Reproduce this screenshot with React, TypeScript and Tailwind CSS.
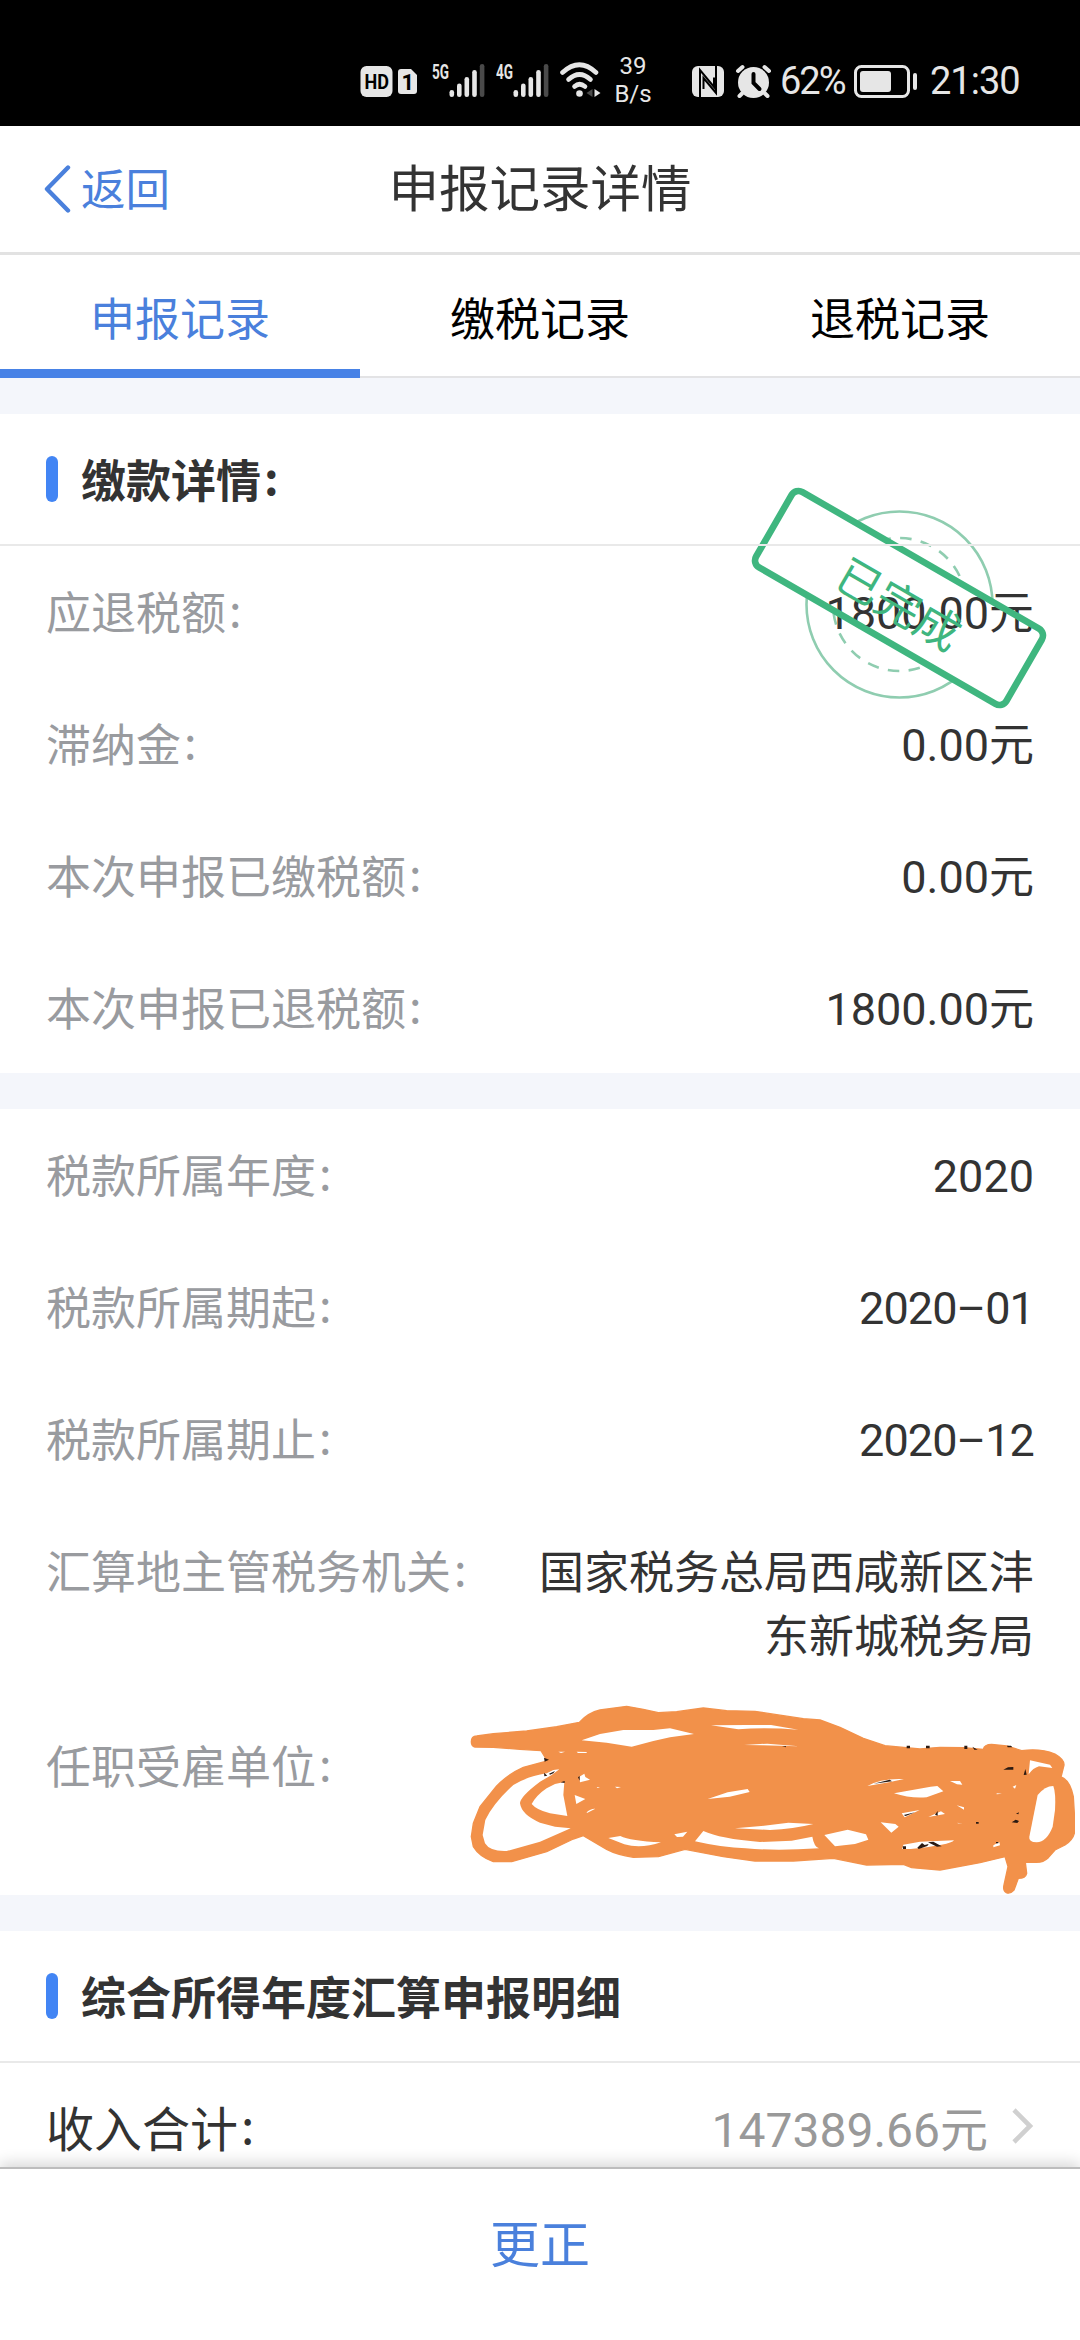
import { ReactNode } from "react"

type RowItem = {
    label: string
    value: string
}

const paymentRows: RowItem[] = [
    { label: "应退税额", value: "1800.00元" },
    { label: "滞纳金", value: "0.00元" },
    { label: "本次申报已缴税额", value: "0.00元" },
    { label: "本次申报已退税额", value: "1800.00元" },
]

const periodRows: RowItem[] = [
    { label: "税款所属年度", value: "2020" },
    { label: "税款所属期起", value: "2020–01" },
    { label: "税款所属期止", value: "2020–12" },
]

const tabs = ["申报记录", "缴税记录", "退税记录"]

const Signal = ({ label }: { label: string }) => (
    <svg width="54" height="36" viewBox="0 0 54 36" fill="#e6e6e6">
        <text x="0" y="16.5" fontSize="19.5" fontWeight="700" textLength="17" lengthAdjust="spacingAndGlyphs" fontFamily="Roboto, sans-serif">{label}</text>
        <rect x="17.5" y="28" width="4.6" height="7" rx="2.3" />
        <rect x="25" y="21.5" width="4.6" height="13.5" rx="2.3" />
        <rect x="32.5" y="15" width="4.6" height="20" rx="2.3" />
        <rect x="40.2" y="8" width="4.6" height="27" rx="2.3" />
        <rect x="47.8" y="2" width="4.6" height="33" rx="2.3" fill="#4a4a4a" />
    </svg>
)

const StatusBar = () => {
    return (
        <div className="flex h-[126px] items-center bg-black pt-[33px] pl-[360px] text-[#e6e6e6]">
            <svg width="58" height="36" viewBox="0 0 58 36">
                <rect x="0.5" y="4" width="32" height="31" rx="6" fill="#e6e6e6" />
                <text x="4.5" y="27.3" fontSize="20.5" fontWeight="700" textLength="24.5" lengthAdjust="spacingAndGlyphs" fontFamily="Roboto, sans-serif" fill="#000">HD</text>
                <path d="M41 7h10l6 6v16a3 3 0 0 1-3 3H41a3 3 0 0 1-3-3V10a3 3 0 0 1 3-3z" fill="#e6e6e6" />
                <text x="41.5" y="27.5" fontSize="22" fontWeight="700" fontFamily="Roboto, sans-serif" fill="#000">1</text>
            </svg>
            <div className="ml-[14px]"><Signal label="5G" /></div>
            <div className="ml-[10px]"><Signal label="4G" /></div>
            <svg className="ml-[9px]" width="44" height="36" viewBox="0 0 44 36" fill="none" stroke="#e6e6e6" strokeWidth="4.6" strokeLinecap="round">
                <path d="M3.5 10.5Q20.5-5 37 10.5" />
                <path d="M9.5 17.5Q20.5 7.5 31.5 17.5" />
                <path d="M15.5 24.5Q20.5 20 26 24.5" />
                <circle cx="20.5" cy="31.5" r="3.3" fill="#e6e6e6" stroke="none" />
                <path d="M33.5 27v8l-6-4z" fill="#4a4a4a" stroke="none" />
                <path d="M35.5 27v8l6-4z" fill="#e6e6e6" stroke="none" />
            </svg>
            <div className="ml-[9px] w-[42px] text-center font-[Roboto] text-[24px] leading-[28px]">
                <p>39</p>
                <p>B/s</p>
            </div>
            <svg className="ml-[37px]" width="34" height="36" viewBox="0 0 34 36">
                <rect x="1" y="4" width="32" height="31" rx="6" fill="#e6e6e6" />
                <path d="M9 35V8l14 17v-9.500M25 4v27L12.500 16v11" fill="none" stroke="#000" strokeWidth="2" />
            </svg>
            <svg className="ml-[10px]" width="38" height="36" viewBox="0 0 38 36" fill="none" stroke="#e6e6e6" strokeLinecap="round">
                <circle cx="18.5" cy="20.5" r="15.5" fill="#e6e6e6" stroke="none" />
                <path d="M3 9l4.500-4M34 9l-4.500-4M7 31.500l-2.500 2.500M30 31.500l2.500 2.500" strokeWidth="4" />
                <path d="M18.500 12v9l6 6" stroke="#000" strokeWidth="4" />
            </svg>
            <span className="ml-[7px] w-[68px] pt-[3px] font-[Roboto] text-[38px] leading-none tracking-[-2px]">62%</span>
            <svg className="ml-[6px]" width="64" height="36" viewBox="0 0 64 36">
                <rect x="1.5" y="4.5" width="53" height="30" rx="6" fill="none" stroke="#e6e6e6" strokeWidth="3" />
                <rect x="6" y="9" width="31" height="21" rx="3" fill="#e6e6e6" />
                <rect x="59" y="11" width="4" height="17" rx="2" fill="#e6e6e6" />
            </svg>
            <span className="ml-[12px] pt-[3px] font-[Roboto] text-[38px] leading-none tracking-[-1px]">21:30</span>
        </div>
    )
}

const Colon = () => <span className="relative -top-[3px] ml-[3px]">:</span>

// digits in Roboto, everything else stays in the CJK face
const Value = ({ children }: { children: ReactNode }) => (
    <span>
        <span className="font-['Roboto','Noto_Sans_CJK_SC',sans-serif] leading-none">{children}</span>
    </span>
)

const SectionTitle = ({ children }: { children: ReactNode }) => (
    <div className="relative z-10 flex h-[132px] items-center border-b-2 border-[#e9e9e9] pl-[46px]">
        <div className="h-[46px] w-3 rounded-full bg-[#4285f4]" />
        <h2 className="ml-[23px] text-[45px] font-bold leading-[64px]">{children}</h2>
    </div>
)

const Row = ({ label, value }: RowItem) => (
    <div className="flex h-[132px] items-center justify-between px-[46px] pb-[3px]">
        <span className="text-[#999b9f]">{label}<Colon /></span>
        <span className={value.includes("–") ? "pb-[2px] tracking-[-0.9px]" : "pb-[2px]"}>
            <Value>{value}</Value>
        </span>
    </div>
)

const Stamp = () => (
    <svg className="absolute right-[27px] top-[60px]" width="310" height="240" viewBox="742 474 310 240" fill="none">
        <defs>
            <mask id="outside-label">
                <rect x="742" y="474" width="310" height="240" fill="#fff" />
                <rect x="753.5" y="554.5" width="289" height="87" rx="8" transform="rotate(30 898 598)" fill="#000" />
            </mask>
        </defs>
        <g mask="url(#outside-label)" stroke="#8fcdb0" strokeWidth="2.6">
            <circle cx="898.5" cy="604.5" r="93" />
            <circle cx="898.5" cy="604.5" r="66.5" strokeDasharray="11.5 9.4" />
        </g>
        <rect x="753.5" y="554.5" width="289" height="87" rx="8" transform="rotate(30 898 598)" stroke="#3fb67f" strokeWidth="6.6" />
        <text x="898" y="621" textAnchor="middle" fontSize="45" transform="rotate(30 898 604)" fill="#3fb67f">已完成</text>
    </svg>
)

// marker strokes that cover the employer name
const Scribble = () => (
    <svg className="absolute left-[440px] top-[571px]" width="640" height="220" viewBox="0 0 1920 660">
        <path
            fill="#f2914a"
            stroke="#f2914a"
            strokeWidth="4"
            strokeLinejoin="round"
            d="M94 185Q94 169 110 168L160 161 260 153 350 140 418 127Q445 98 480 90L560 79 610 88 655 98 710 95 790 84 860 92 945 94 1010 104 1090 116 1140 120 1200 142 1270 175 1335 197 1440 207 1500 202 1570 203 1630 208Q1633 193 1655 193L1700 198 1745 212Q1800 204 1845 222 1873 238 1872 255L1863 291Q1890 300 1900 350L1903 400 1903 460Q1898 480 1875 495L1845 510 1825 533Q1810 547 1790 547L1756 547 1760 580Q1757 595 1735 595L1722 630Q1710 643 1699 638 1688 632 1692 615L1704 560 1695 530 1620 548 1500 570 1415 563 1390 553 1280 555 1180 535 1060 543 945 543 850 530 735 508 655 530 580 532Q530 524 500 508L430 467 400 477 320 515 215 545 160 545Q118 530 100 500L94 470 100 430 120 380 170 318Q205 282 250 262L322 243 303 212 240 208 160 202 105 201Q94 198 94 185z"
        />
        <g fill="#fff">
            <path d="M392 445L300 485 200 513Q150 515 135 490L128 465 136 420Q160 370 220 315 260 290 320 280L340 270 358 268 335 285 300 305Q240 350 240 370 245 405 300 428L345 440z" />
            <path d="M275 372Q290 345 320 325L345 312 373 306 370 345 382 408 330 400Q290 390 275 372z" />
            <path d="M425 181L480 162 550 150 640 150 690 145 762 162 690 172 640 183 575 200 500 188z" />
            <path d="M418 290l15-9 3 10 14 8-30 8zM404 345l32 12-27 15zM440 397q12-12 26-11l-25 13zM505 474l36-6q30 15 122 19-60 20-110 6zM703 463l39-8-13 15-18 1zM790 453q50 23 170 33l95-4 62-12q5 30 20 35-130 8-220 0-70-2-152-21z" />
            <path d="M803 357l60-20 60-10 6 9-60 14zM885 445l70-6 90-11 75 4q-60 15-130 18zM813 136l110-1 70 0 82 14q-100-8-180-1zM912 195l70-4 95 8-110-3zM355 215h20l-12 4zM410 215l30 1v3h-26zM525 320l18 1-12 4zM470 321l10 1-7 2z" />
            <path d="M1153 465l70-16 55 14 7 16-40 13-60 7zM1322 427l44 5 10 8-22 18zM1362 340l110-20 20-2 18 16-50 18q-50 4-98-12zM1282 318q40-24 110-21l-45 10zM1530 303h30l7 11-16-1zM1550 376l22 6v7zM1553 428l14 4-14-2zM1385 400l54-10-45 22zM1465 411l38-17 12 8zM1390 494l50-9 102-4q-10 14-130 26h-26zM1660 496l18-10 2 10-20 6zM1670 340l16 1-16 2zM1718 320l11-5-4 11z" />
            <path d="M1770 241l60 13 7 10-40-5q-18 5-31 24z" />
            <path d="M1793 345Q1815 318 1840 318 1848 340 1845 390L1838 440Q1820 486 1790 487 1765 486 1768 470z" />
        </g>
        <path
            fill="#2b1a12"
            d="M312 233l15 6-13 6zM312 278l10 9-9 2zM327 281l18-8-5 7-10 4zM362 307l12-4v6zM414 292l5-4v14zM1301 311l48-12 7 5zM1400 197h10v8h-10zM1458 197h11v8h-11zM1573 197h9v10h-9zM1597 200l16 9h-10zM1701 197h12l4 5h-14zM1690 269l14-7 16-1v8zM1751 285l5-18 4 17zM1391 405l34-8-28 11zM1485 404l8-11v14zM1432 503l14-14 8 6 12-3-4 6-26 9zM1464 487l16-2 25 14-14 1zM1388 499h10v8h-9zM1715 427l12-8 10 4-5 6zM1728 401l9-4-2 6zM1608 426h8v5h-8zM1668 486h7v4h-7zM1026 198l12 1v3z"
        />
    </svg>
)

const Divider = () => <div className="h-9 shrink-0 bg-[#f4f6fb]" />

export default function App() {
    return (
        <div className="flex h-[2340px] w-[1080px] flex-col overflow-hidden bg-white font-['Noto_Sans_CJK_SC',sans-serif] text-[45px] leading-[64px] text-[#333]">
            <StatusBar />

            <header className="grid h-[129px] shrink-0 grid-cols-3 items-center border-b-[3px] border-[#e2e2e2]">
                <div className="flex items-center pl-[44px] text-[#4a80dc]">
                    <svg width="28" height="48" viewBox="0 0 28 48" fill="none" stroke="currentColor" strokeWidth="4.4" strokeLinecap="round" strokeLinejoin="round">
                        <path d="M24 2.500L3 24l21 21.500" />
                    </svg>
                    <span className="ml-[9px] pb-1 text-[44.5px]">返回</span>
                </div>
                <h1 className="whitespace-nowrap pb-2 text-center text-[50.5px]">申报记录详情</h1>
            </header>

            <nav className="grid h-[123px] shrink-0 grid-cols-3 border-b-2 border-[#e3e3e5] text-center text-black">
                {tabs.map((tab, i) => (
                    <div
                        key={tab}
                        className={i === 0 ? "-mb-0.5 border-b-[9px] border-[#4782e6] pt-[30px] text-[#4a80dc]" : "pt-[30px]"}
                    >
                        {tab}
                    </div>
                ))}
            </nav>
            <Divider />

            <section className="relative h-[659px] shrink-0">
                <SectionTitle>缴款详情<Colon /></SectionTitle>
                {paymentRows.map((row) => <Row key={row.label} {...row} />)}
                <Stamp />
            </section>
            <Divider />

            <section className="relative h-[786px] shrink-0">
                {periodRows.map((row) => <Row key={row.label} {...row} />)}
                <div className="flex justify-between px-[46px] pt-[33px]">
                    <span className="text-[#999b9f]">汇算地主管税务机关<Colon /></span>
                    <span className="w-[500px] text-right">国家税务总局西咸新区沣东新城税务局</span>
                </div>
                <div className="px-[46px] pt-[67px] text-[#999b9f]">任职受雇单位<Colon /></div>
                <Scribble />
            </section>
            <Divider />

            <section className="min-h-0 flex-1">
                <SectionTitle>综合所得年度汇算申报明细</SectionTitle>
                <div className="flex h-[132px] items-center px-[46px] pb-[6px] text-[48px]">
                    <span className="flex-1">收入合计<Colon /></span>
                    <span className="text-[#999]"><Value>147389.66元</Value></span>
                    <svg className="ml-[24px]" width="22" height="36" viewBox="0 0 22 36" fill="none" stroke="#d0d0d0" strokeWidth="4.6">
                        <path d="M2 2l16 16L2 34" />
                    </svg>
                </div>
            </section>

            <footer className="relative z-20 flex h-[173px] shrink-0 items-center justify-center border-t-2 border-[#bdbdbd] bg-white pb-[27px] text-[50px] text-[#4a80dc] shadow-[0_-4px_14px_rgba(0,0,0,0.16)]">
                更正
            </footer>
        </div>
    )
}
